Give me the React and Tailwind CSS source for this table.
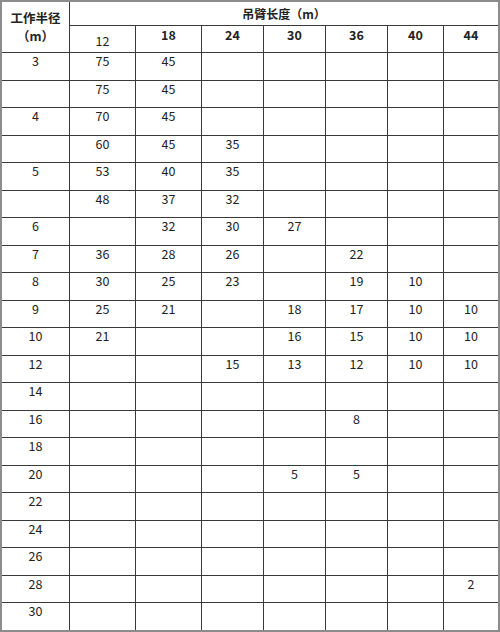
import React from "react";

const cols = ["12", "18", "24", "30", "36", "40", "44"];

// 每行：工作半径 + 各吊臂长度对应的起重量
const rows = [
  ["3", "75", "45"],
  ["", "75", "45"],
  ["4", "70", "45"],
  ["", "60", "45", "35"],
  ["5", "53", "40", "35"],
  ["", "48", "37", "32"],
  ["6", "", "32", "30", "27"],
  ["7", "36", "28", "26", "", "22"],
  ["8", "30", "25", "23", "", "19", "10"],
  ["9", "25", "21", "", "18", "17", "10", "10"],
  ["10", "21", "", "", "16", "15", "10", "10"],
  ["12", "", "", "15", "13", "12", "10", "10"],
  ["14"],
  ["16", "", "", "", "", "8"],
  ["18"],
  ["20", "", "", "", "5", "5"],
  ["22"],
  ["24"],
  ["26"],
  ["28", "", "", "", "", "", "", "2"],
  ["30"],
];

export default function App() {
  return (
    <div
      className="w-[500px] h-[632px] box-border border-2 border-[#8c8c8c] bg-[#3a3a3a] text-[12.5px] text-[#222]"
      style={{ fontFamily: '"Noto Sans CJK SC", "Noto Sans", sans-serif' }}
    >
      <div className="grid grid-cols-[67px_65px_65px_61px_61px_61px_55px_54px] grid-rows-[23px_26px_repeat(21,1fr)] gap-px h-full">
        <div className="row-span-2 bg-white flex flex-col items-center justify-center font-bold text-[12.5px] leading-[18px]">
          <span>工作半径</span>
          <span>（m）</span>
        </div>
        <div className="col-span-7 bg-white flex items-center justify-center font-bold text-[12px]">
          吊臂长度（m）
        </div>
        {cols.map((c, i) => (
          <div
            key={c}
            className={
              i === 0
                ? "bg-white text-center pt-[7px] leading-[16px]"
                : "bg-white text-center pt-[1px] leading-[16px] font-bold"
            }
          >
            {c}
          </div>
        ))}
        {rows.map((r, ri) =>
          Array.from({ length: 8 }).map((_, ci) => (
            <div key={ri + "-" + ci} className="bg-white text-center leading-[16px]">
              {r[ci] || ""}
            </div>
          ))
        )}
      </div>
    </div>
  );
}
